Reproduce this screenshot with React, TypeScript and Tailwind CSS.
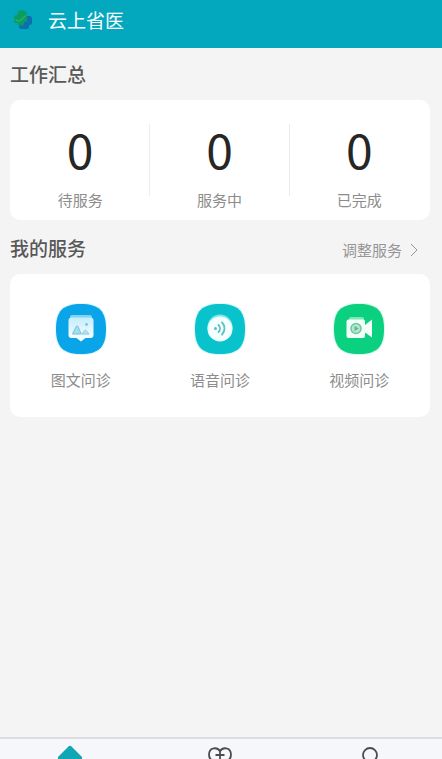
import React from 'react';

const stats = [
    { label: '待服务', value: 0 },
    { label: '服务中', value: 0 },
    { label: '已完成', value: 0 },
];

function Logo() {
    return (
        <svg className="w-5 h-5" viewBox="0 0 20 20" aria-hidden="true">
            <path d="M15 6h2.500q2.500 0 2.500 2.500v4q0 2.500-2.500 2.500H17v1.500q0 2.500-2.500 2.500h-5Q7 19 7 16.500V14z" fill="#0c6fae" />
            <path d="M8 0.500h4q2.500 0 2.500 2.500v2h.5v5q0 2-2 2h-1v1.500q0 2-2 2H7.500q-2 0-2-2V13H3.500Q2 13 2 11V7.500Q2 5 4.500 5H5.500V3q0-2.500 2.500-2.500z" fill="#0b9c62" />
            <path d="M3.500 9.500q3.500 3 6 0t4.500-4" stroke="#2fb06c" strokeWidth="1.200" fill="none" />
        </svg>
    );
}

function ImageTextIcon() {
    return (
        <svg className="w-[54px] h-[54px]" viewBox="0 0 54 54" aria-hidden="true">
            <defs>
                <linearGradient id="bubble" x1="0" y1="0" x2="0" y2="1">
                    <stop offset="0" stopColor="#c5edfb" />
                    <stop offset="1" stopColor="#ffffff" />
                </linearGradient>
            </defs>
            <path d="M27 1C46 1 53 8 53 27S46 53 27 53 1 46 1 27 8 1 27 1z" fill="#e0f6fd" />
            <path d="M27 2C45 2 52 9 52 27S45 52 27 52 2 45 2 27 9 2 27 2z" fill="#0aa5e8" />
            <rect x="16" y="13" width="22" height="8" rx="2" fill="#7dd4f5" />
            <path d="M17.500 15.500h19a3 3 0 0 1 3 3V33a3 3 0 0 1-3 3H31.500L27 39.500 22.500 36h-5a3 3 0 0 1-3-3V18.500a3 3 0 0 1 3-3z" fill="url(#bubble)" />
            <path d="M18.500 32l3.700-7.500c.5-1 1.200-1 1.700 0l3.400 7.500z" fill="#a5ddf0" stroke="#75c3df" />
            <path d="M28 32l2.700-3.500c.4-.5 1-.5 1.400 0l3 3.500z" fill="#b8e5f4" stroke="#82cbe4" />
            <circle cx="32.500" cy="22.500" r="1.400" fill="#75c9df" />
        </svg>
    );
}

function VoiceIcon() {
    return (
        <svg className="w-[54px] h-[54px]" viewBox="0 0 54 54" aria-hidden="true">
            <path d="M27 1C46 1 53 8 53 27S46 53 27 53 1 46 1 27 8 1 27 1z" fill="#dcf8fa" />
            <path d="M27 2C45 2 52 9 52 27S45 52 27 52 2 45 2 27 9 2 27 2z" fill="#08c3cc" />
            <circle cx="27" cy="25" r="12.500" fill="#83e5e8" />
            <circle cx="27" cy="27" r="12.500" fill="#f4ffff" />
            <circle cx="22.500" cy="26.500" r="1.500" fill="#5ebdbf" />
            <path d="M25.500 23a5 5 0 0 1 0 7M29 20.500a8.500 8.500 0 0 1 0 12" fill="none" stroke="#5ebdbf" strokeWidth="1.800" strokeLinecap="round" />
        </svg>
    );
}

function VideoIcon() {
    return (
        <svg className="w-[54px] h-[54px]" viewBox="0 0 54 54" aria-hidden="true">
            <path d="M27 1C46 1 53 8 53 27S46 53 27 53 1 46 1 27 8 1 27 1z" fill="#d8faea" />
            <path d="M27 2C45 2 52 9 52 27S45 52 27 52 2 45 2 27 9 2 27 2z" fill="#0bd080" />
            <rect x="17" y="15" width="15" height="12" rx="2" fill="#7de7b9" />
            <path d="M16.500 17.500H31a2 2 0 0 1 2 2V23l7-5.500v18L33 30.500V34a2 2 0 0 1-2 2H16.500a2 2 0 0 1-2-2V19.500a2 2 0 0 1 2-2z" fill="#f1fff8" />
            <circle cx="24" cy="26.500" r="5" fill="#b4e9d1" stroke="#6fc5a0" strokeWidth="1.500" />
            <path d="M22.500 23.800v5.400l4.300-2.700z" fill="#5eb892" />
        </svg>
    );
}

const services = [
    { label: '图文问诊', icon: <ImageTextIcon /> },
    { label: '语音问诊', icon: <VoiceIcon /> },
    { label: '视频问诊', icon: <VideoIcon /> },
];

export default function App() {
    return (
        <div className="flex flex-col h-screen overflow-hidden bg-[#f4f4f4] font-['Noto_Sans_CJK_SC',sans-serif]">
            <header className="flex shrink-0 items-center h-12 pl-3 pb-3 pt-1 gap-4 bg-[#03a8bf]">
                <Logo />
                <h1 className="text-[19px] leading-6 text-white">云上省医</h1>
            </header>
            <main className="flex-1 min-h-0 px-[10px] pr-3 pt-[14px]">
                <h2 className="text-[19px] leading-6 font-medium text-[#585858]">工作汇总</h2>
                <section className="grid grid-cols-3 mt-[14px] h-[120px] px-px py-6 bg-white rounded-[10px]">
                    {stats.map((item) => (
                        <div key={item.label}
                             className="flex flex-col items-center h-[72px] border-r border-[#ececec] last:border-r-0">
                            <span className="text-[48px] leading-[48px] text-[#262626]">{item.value}</span>
                            <span className="mt-4 text-[15px] leading-6 text-[#8c8c8c]">{item.label}</span>
                        </div>
                    ))}
                </section>
                <div className="flex items-center justify-between mt-4 pr-3">
                    <h2 className="text-[19px] leading-6 font-medium text-[#585858]">我的服务</h2>
                    <button type="button" className="flex items-center gap-2 pt-1 text-[15px] leading-5 text-[#969696]">
                        调整服务
                        <svg className="w-2 h-4" viewBox="0 0 8 16" fill="none" stroke="#969696" aria-hidden="true">
                            <path d="M1 2l6 6-6 6" />
                        </svg>
                    </button>
                </div>
                <section className="grid grid-cols-3 mt-[14px] h-[143px] px-px pt-7 bg-white rounded-[10px]">
                    {services.map((item) => (
                        <button type="button" key={item.label} className="flex flex-col items-center">
                            {item.icon}
                            <span className="mt-3 text-[15px] leading-6 text-[#8c8c8c]">{item.label}</span>
                        </button>
                    ))}
                </section>
            </main>
            <nav className="flex shrink-0 justify-between h-[22px] pl-[58px] pr-[60px] pt-[6px] overflow-hidden bg-[#f6f7fb] border-t-2 border-[#dcdde0]">
                <button type="button" aria-label="首页" className="w-6 h-6">
                    <svg className="w-6 h-6" viewBox="0 0 24 24" aria-hidden="true">
                        <path d="M10.500 1.500q1.500-1.300 3 0L24 12v12H0V12z" fill="#0fa6b6" />
                    </svg>
                </button>
                <button type="button" aria-label="健康" className="w-6 h-6">
                    <svg className="w-6 h-6" viewBox="0 0 24 24" fill="none" stroke="#4c4c50" strokeWidth="1.800" aria-hidden="true">
                        <path d="M12 6.500C10 2 1 1.500 1 10c0 5 5 8 11 13 6-5 11-8 11-13 0-8.500-9-8-11-3.500zM7.500 10h9M12 6v8.500" />
                    </svg>
                </button>
                <button type="button" aria-label="我的" className="w-6 h-6">
                    <svg className="w-6 h-6" viewBox="0 0 24 24" fill="none" stroke="#4c4c50" strokeWidth="1.800" aria-hidden="true">
                        <circle cx="12" cy="10" r="7" />
                        <path d="M3 24q2-7 9-7t9 7" />
                    </svg>
                </button>
            </nav>
        </div>
    );
}
